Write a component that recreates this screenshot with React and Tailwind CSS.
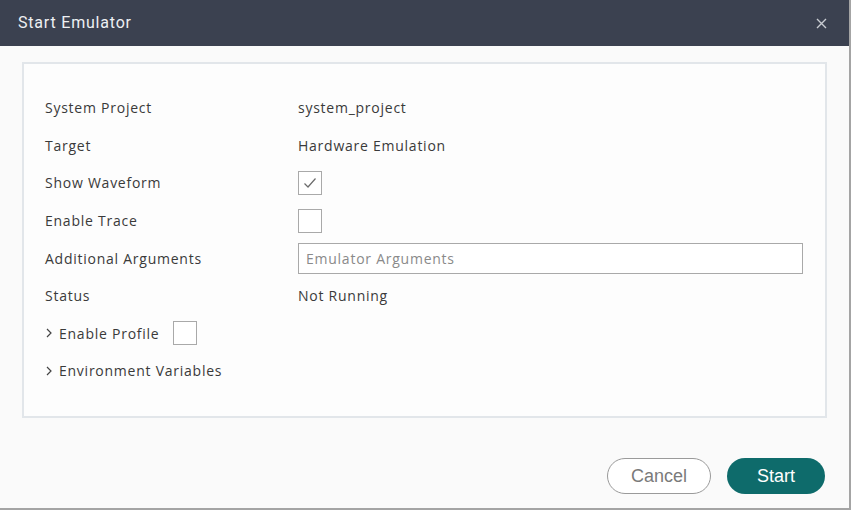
import React from 'react';

const rows = [
  { label: 'System Project', value: 'system_project' },
  { label: 'Target', value: 'Hardware Emulation' },
  { label: 'Show Waveform', check: true },
  { label: 'Enable Trace', check: false },
  { label: 'Additional Arguments', input: 'Emulator Arguments' },
  { label: 'Status', value: 'Not Running' },
];

function Box({ checked }) {
  return (
    <div className="w-[24px] h-[24px] border border-[#a9a9a9] bg-white flex items-center justify-center">
      {checked && (
        <svg width="14" height="12" viewBox="0 0 14 12" fill="none">
          <path d="M1.5 6.5 L5 10 L12.5 1.5" stroke="#6b6b6b" strokeWidth="1.2" />
        </svg>
      )}
    </div>
  );
}

function Chevron() {
  return (
    <svg width="8" height="12" viewBox="0 0 8 12" fill="none" className="mr-[6px]">
      <path d="M2 2 L6 6 L2 10" stroke="#444" strokeWidth="1.2" />
    </svg>
  );
}

export default function App() {
  return (
    <div className="w-[851px] h-[510px] flex flex-col bg-[#fafafa] border-r-2 border-b-2 border-[#a4a4a4] text-[14px] tracking-[0.75px] text-[#3a3a3a]" style={{ fontFamily: '"Open Sans", sans-serif' }}>
      <div className="h-[46px] bg-[#3b4150] flex items-center justify-between pl-[18px] pr-[22px] shrink-0">
        <span className="text-[#eef0f3] text-[16px] tracking-[0.8px]" style={{ fontFamily: 'Roboto, sans-serif' }}>Start Emulator</span>
        <svg width="11" height="11" viewBox="0 0 11 11" fill="none">
          <path d="M1 1 L10 10 M10 1 L1 10" stroke="#c9ccd2" strokeWidth="1.4" />
        </svg>
      </div>

      <div className="px-[22px] pt-[16px]">
        <div className="h-[356px] border-2 border-[#e2e6ea] bg-[#fdfdfd] pl-[21px] pr-[22px] pt-[25px]">
          {rows.map((r) => (
            <div key={r.label} className="flex items-center h-[37.6px]">
              <div className="w-[253px]">{r.label}</div>
              {r.value && <div>{r.value}</div>}
              {r.check !== undefined && <Box checked={r.check} />}
              {r.input && (
                <div className="flex-1 h-[31px] border border-[#a9a9a9] bg-white flex items-center px-[7px] text-[#8a8a8a]">
                  {r.input}
                </div>
              )}
            </div>
          ))}
          <div className="flex items-center h-[37.6px]">
            <Chevron />
            <span>Enable Profile</span>
            <div className="ml-[14px]"><Box /></div>
          </div>
          <div className="flex items-center h-[37.6px]">
            <Chevron />
            <span>Environment Variables</span>
          </div>
        </div>
      </div>

      <div className="flex justify-end gap-[16px] pr-[24px] mt-[40px]" style={{ fontFamily: '"Liberation Sans", Arial, sans-serif' }}>
        <button className="w-[104px] h-[36px] rounded-full border border-[#9a9a9a] bg-white text-[#7a7a7a] text-[18px] tracking-normal">Cancel</button>
        <button className="w-[98px] h-[36px] rounded-full bg-[#0e6b6b] text-white text-[18px] tracking-normal">Start</button>
      </div>
    </div>
  );
}
